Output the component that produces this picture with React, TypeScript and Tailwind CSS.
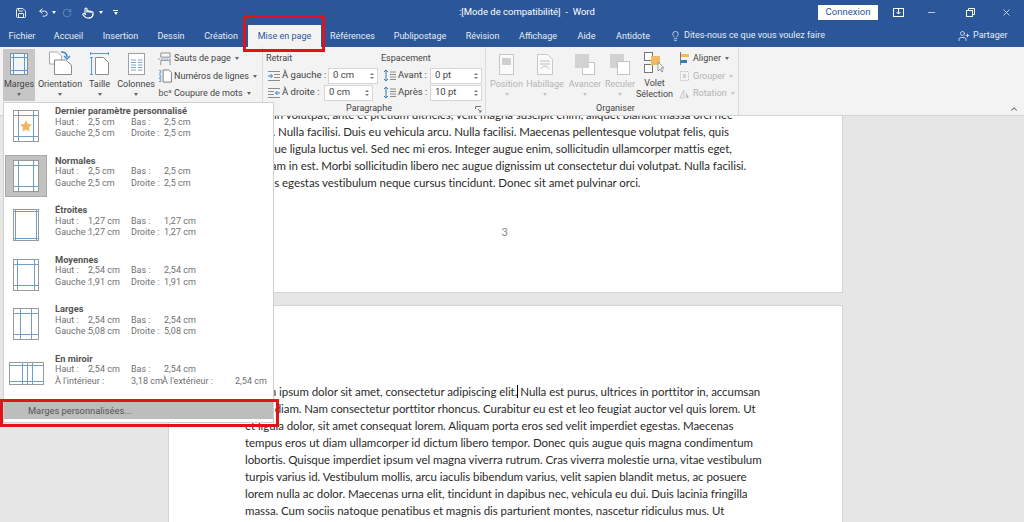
import { Save, Undo2, RotateCw, Pointer, Lightbulb, UserPlus, Minus, X, ChevronUp } from "lucide-react";

const TABS: { label: string; w: number }[] = [
  { label: "Fichier", w: 44 },
  { label: "Accueil", w: 49 },
  { label: "Insertion", w: 55 },
  { label: "Dessin", w: 46 },
  { label: "Création", w: 54 },
  { label: "Mise en page", w: 73 },
  { label: "Références", w: 63 },
  { label: "Publipostage", w: 72 },
  { label: "Révision", w: 53 },
  { label: "Affichage", w: 58 },
  { label: "Aide", w: 39 },
  { label: "Antidote", w: 54 },
];

function Caret({ muted }: { muted?: boolean }) {
  return (
    <span
      className={`mx-auto block h-0 w-0 border-x-[2px] border-t-[3px] border-x-transparent ${
        muted ? "border-t-[#c4c4c4]" : "border-t-[#666666]"
      }`}
    />
  );
}

function LargeButton({
  label,
  icon,
  w,
  muted,
  active,
}: {
  label: string;
  icon: React.ReactNode;
  w: number;
  muted?: boolean;
  active?: boolean;
}) {
  return (
    <div
      className={`flex h-[52px] shrink-0 flex-col items-center ${active ? "bg-[#c6c6c6]" : ""} ${
        muted ? "text-[#b4b4b4]" : "text-[#444444]"
      }`}
      style={{ width: w }}
    >
      <div className="flex h-[26px] items-end justify-center">{icon}</div>
      <div className="mt-[3px] h-[12px] whitespace-nowrap leading-[12px]">{label}</div>
      <div className="mt-[3px]">
        <Caret muted={muted} />
      </div>
    </div>
  );
}

function MarginsLarge() {
  return (
    <svg width="18" height="22" viewBox="0 0 18 22" fill="none">
      <rect x=".5" y=".5" width="17" height="21" fill="#f4f4f4" stroke="#8c8c8c" />
      <path d="M3.500 0v22M14.500 0v22M0 4.500h18M0 17.500h18" stroke="#5c9bd1" />
    </svg>
  );
}

function OrientationIcon() {
  return (
    <svg width="23" height="24" viewBox="0 0 23 24" fill="none">
      <path d="M.5 1h8l4 4v8H.5z" fill="#fff" stroke="#a8a8a8" />
      <path d="M5.500 9h11l6 5v9.500h-17z" fill="#fff" stroke="#8c8c8c" />
      <path d="M12 1c4 0 6 2 6 5" stroke="#3f86c6" strokeWidth="1.6" />
      <path d="M15 5l3 3 3-3" stroke="#3f86c6" strokeWidth="1.4" />
    </svg>
  );
}

function SizeIcon() {
  return (
    <svg width="19" height="23" viewBox="0 0 19 23" fill="none">
      <path d="M0 1.500h19M.5 0v3M18.500 0v3" stroke="#5c9bd1" />
      <path d="M5.500 5.500h8l5 5v12h-13z" fill="#fff" stroke="#8c8c8c" />
      <path d="M1.500 5v18M0 5.500h3M0 22.500h3" stroke="#5c9bd1" />
    </svg>
  );
}

function ColumnsIcon() {
  return (
    <svg width="17" height="22" viewBox="0 0 17 22" fill="none">
      <rect x=".5" y=".5" width="16" height="21" fill="#fff" stroke="#a0a0a0" />
      <path d="M3 7h5M3 9.500h5M3 12h5M3 14.500h5M3 17h5M10 7h4.500M10 9.500h4.500M10 12h4.500M10 14.500h4.500M10 17h4.500" stroke="#7da7cc" />
    </svg>
  );
}

function BreaksIcon() {
  return (
    <svg width="15" height="14" viewBox="0 0 15 14" fill="none">
      <path d="M3 .5h10v4.500H3zM3 13.500V8.500h10v5" stroke="#8c8c8c" />
      <path d="M0 7h15" stroke="#5c9bd1" strokeDasharray="2 1" />
    </svg>
  );
}

function LineNumbersIcon() {
  return (
    <svg width="15" height="14" viewBox="0 0 15 14" fill="none">
      <path d="M1 1h2v3H1M1 6h2v3H1M1 10h2v3H1" stroke="#5c9bd1" />
      <path d="M5.500.5h6l3 3v10h-9z" fill="#fff" stroke="#777777" />
    </svg>
  );
}

function IndentIcon({ right }: { right?: boolean }) {
  return (
    <svg width="12" height="10" viewBox="0 0 12 10" fill="none">
      {right ? (
        <>
          <path d="M0 .5h12M0 3.500h6M0 6.500h6M0 9.500h12" stroke="#8c8c8c" />
          <path d="M12 5H7.500M9.500 3l-2 2 2 2" stroke="#2f7fc1" />
        </>
      ) : (
        <>
          <path d="M0 .5h12M6 3.500h6M6 6.500h6M0 9.500h12" stroke="#8c8c8c" />
          <path d="M0 5h4.500M2.500 3l2 2-2 2" stroke="#2f7fc1" />
        </>
      )}
    </svg>
  );
}

function SpacingIcon() {
  return (
    <svg width="13" height="13" viewBox="0 0 13 13" fill="none">
      <path d="M3 1v11M1 3l2-2 2 2M1 10l2 2 2-2" stroke="#2f7fc1" />
      <path d="M7 3h6M7 5.500h6M7 8h6M7 10.500h6" stroke="#8c8c8c" />
    </svg>
  );
}

function Spin({ value, w }: { value: string; w: number }) {
  return (
    <div
      className="flex h-[16px] shrink-0 items-center justify-between border border-[#d6d6d6] bg-white pl-[4px] pr-[3px] text-[#444444]"
      style={{ width: w }}
    >
      <span>{value}</span>
      <span className="flex flex-col gap-[2px]">
        <span className="block h-0 w-0 border-x-[2px] border-b-[2px] border-x-transparent border-b-[#777777]" />
        <span className="block h-0 w-0 border-x-[2px] border-t-[2px] border-x-transparent border-t-[#777777]" />
      </span>
    </div>
  );
}

function SmallRow({ icon, label, muted }: { icon: React.ReactNode; label: string; muted?: boolean }) {
  return (
    <div className={`flex h-[17.500px] items-center gap-[2px] whitespace-nowrap ${muted ? "text-[#b4b4b4]" : "text-[#444444]"}`}>
      <span className="flex w-[14px] justify-center">{icon}</span>
      <span>{label}</span>
      <span className="ml-[2px]">
        <Caret muted={muted} />
      </span>
    </div>
  );
}

function Ribbon() {
  return (
    <div className="flex h-[69px] shrink-0 border-b border-[#d4d4d4] bg-[#f3f3f3] text-[9px]">
      <div className="flex w-[263px] shrink-0 border-r border-[#dcdcdc] pl-[3px] pt-[2px]">
        <LargeButton label="Marges" w={32} active icon={<MarginsLarge />} />
        <div className="ml-[2px]">
          <LargeButton label="Orientation" w={46} icon={<OrientationIcon />} />
        </div>
        <div className="ml-[2px]">
          <LargeButton label="Taille" w={29} icon={<SizeIcon />} />
        </div>
        <div className="ml-[3px]">
          <LargeButton label="Colonnes" w={38} icon={<ColumnsIcon />} />
        </div>
        <div className="ml-[3px] mt-[1px] flex flex-col text-[9px]">
          <SmallRow label="Sauts de page" icon={<BreaksIcon />} />
          <SmallRow label="Numéros de lignes" icon={<LineNumbersIcon />} />
          <SmallRow
            label="Coupure de mots"
            icon={
              <span className="whitespace-nowrap text-[9px] leading-none text-[#555555]">
                bc<sup className="text-[6px]">a</sup>
              </span>
            }
          />
        </div>
      </div>

      <div className="relative flex w-[223px] shrink-0 border-r border-[#dcdcdc] pl-[3px] pt-[4px] text-[9.500px] text-[#444444]">
        <div className="w-[115px]">
          <div className="h-[16px] text-[9px] leading-[14px]">Retrait</div>
          <div className="flex h-[17px] items-center">
            <span className="ml-[2px] mr-[2px] flex"><IndentIcon /></span>
            <span className="w-[46px] whitespace-nowrap">À gauche :</span>
            <Spin value="0 cm" w={50} />
          </div>
          <div className="flex h-[17px] items-center">
            <span className="ml-[2px] mr-[2px] flex"><IndentIcon right /></span>
            <span className="w-[42px] whitespace-nowrap">À droite :</span>
            <Spin value="0 cm" w={49} />
          </div>
        </div>
        <div className="w-[102px]">
          <div className="h-[16px] text-[9px] leading-[14px]">Espacement</div>
          <div className="flex h-[17px] items-center">
            <span className="ml-[2px] mr-[2px] flex"><SpacingIcon /></span>
            <span className="w-[32px] whitespace-nowrap">Avant :</span>
            <Spin value="0 pt" w={52} />
          </div>
          <div className="flex h-[17px] items-center">
            <span className="ml-[2px] mr-[2px] flex"><SpacingIcon /></span>
            <span className="w-[32px] whitespace-nowrap">Après :</span>
            <Spin value="10 pt" w={52} />
          </div>
        </div>
        <div className="absolute bottom-0 left-[83px] text-[9px] leading-[13px]">Paragraphe</div>
        <svg className="absolute bottom-[2px] right-[3px]" width="7" height="7" viewBox="0 0 7 7" fill="none">
          <path d="M.5 3V.5H6M3 3l3 3M6 4v2H4" stroke="#777777" />
        </svg>
      </div>

      <div className="relative flex w-[253px] shrink-0 border-r border-[#dcdcdc] pl-[3px] pt-[2px]">
        <LargeButton
          label="Position"
          w={35}
          muted
          icon={
            <svg width="15" height="21" viewBox="0 0 15 21" fill="none">
              <rect x=".5" y=".5" width="14" height="20" fill="#fafafa" stroke="#c8c8c8" />
              <rect x="3" y="4" width="9" height="7" fill="#cfcfcf" />
            </svg>
          }
        />
        <div className="ml-[2px]">
          <LargeButton
            label="Habillage"
            w={38}
            muted
            icon={
              <svg width="16" height="21" viewBox="0 0 16 21" fill="none">
                <path d="M.5.500h10l5 5v15H.500z" fill="#fafafa" stroke="#c8c8c8" />
                <path d="M3 7h10M3 10h10M4 15c2-4 6-4 8 0" stroke="#bdbdbd" />
              </svg>
            }
          />
        </div>
        <div className="ml-[3px]">
          <LargeButton
            label="Avancer"
            w={36}
            muted
            icon={
              <svg width="20" height="21" viewBox="0 0 20 21" fill="none">
                <rect x="7.500" y="8.500" width="12" height="12" fill="#fff" stroke="#c4c4c4" />
                <rect width="14" height="14" fill="#d2d2d2" />
              </svg>
            }
          />
        </div>
        <div className="ml-[1px]">
          <LargeButton
            label="Reculer"
            w={32}
            muted
            icon={
              <svg width="20" height="21" viewBox="0 0 20 21" fill="none">
                <rect width="14" height="14" fill="#d2d2d2" />
                <rect x="7.500" y="7.500" width="12" height="13" fill="#fff" stroke="#c4c4c4" />
              </svg>
            }
          />
        </div>
        <div className="flex h-[52px] w-[37px] shrink-0 flex-col items-center text-[#444444]">
          <svg className="mt-[3px]" width="21" height="21" viewBox="0 0 21 21" fill="none">
            <rect x=".5" y=".5" width="8" height="8" fill="#fff" stroke="#777777" />
            <rect x=".5" y="12.500" width="8" height="8" fill="#fff" stroke="#777777" />
            <rect x="7" y="4" width="9" height="9" fill="#f0b962" />
            <path d="M14 10v9l2-2 2 3 1-1-2-3h3z" fill="#fff" stroke="#777777" strokeWidth=".7" />
          </svg>
          <div className="mt-[4px] whitespace-nowrap leading-[12px]">Volet</div>
          <div className="whitespace-nowrap leading-[11px]">Sélection</div>
        </div>
        <div className="ml-[4px] mt-[1px] flex flex-col text-[9px]">
          <SmallRow
            label="Aligner"
            icon={
              <svg width="11" height="13" viewBox="0 0 11 13" fill="none">
                <path d="M1.500 0v13" stroke="#777777" />
                <rect x="2" y="2" width="8" height="3" fill="#f0b962" />
                <rect x="2" y="8" width="6" height="3" fill="#2f7fc1" />
              </svg>
            }
          />
          <SmallRow
            muted
            label="Grouper"
            icon={
              <svg width="11" height="12" viewBox="0 0 11 12" fill="none">
                <rect x="1.500" y="1.500" width="8" height="9" stroke="#c8c8c8" strokeDasharray="2 1" />
                <rect x="4" y="4" width="3" height="4" fill="#d2d2d2" />
              </svg>
            }
          />
          <SmallRow
            muted
            label="Rotation"
            icon={
              <svg width="11" height="10" viewBox="0 0 11 10" fill="none">
                <path d="M1 9l4-8v8z" stroke="#c8c8c8" />
                <path d="M7 9V3l3 6z" fill="#bdbdbd" />
              </svg>
            }
          />
        </div>
        <div className="absolute bottom-0 left-[110px] text-[9px] leading-[13px] text-[#444444]">Organiser</div>
      </div>

      <div className="relative flex-1">
        <ChevronUp className="absolute bottom-[1px] right-[5px] h-[10px] w-[10px] text-[#666666]" strokeWidth={2.5} />
      </div>
    </div>
  );
}

const MARGINS: {
  title: string;
  rows: string[][];
  icon: { t: number; b: number; l: number; r: number };
  star?: boolean;
  selected?: boolean;
}[] = [
  {
    title: "Dernier paramètre personnalisé",
    rows: [["Haut :", "2,5 cm", "Bas :", "2,5 cm"], ["Gauche :", "2,5 cm", "Droite :", "2,5 cm"]],
    icon: { t: 5, b: 5, l: 5, r: 5 },
    star: true,
  },
  {
    title: "Normales",
    rows: [["Haut :", "2,5 cm", "Bas :", "2,5 cm"], ["Gauche :", "2,5 cm", "Droite :", "2,5 cm"]],
    icon: { t: 5, b: 5, l: 5, r: 5 },
    selected: true,
  },
  {
    title: "Étroites",
    rows: [["Haut :", "1,27 cm", "Bas :", "1,27 cm"], ["Gauche :", "1,27 cm", "Droite :", "1,27 cm"]],
    icon: { t: 2, b: 2, l: 2, r: 2 },
  },
  {
    title: "Moyennes",
    rows: [["Haut :", "2,54 cm", "Bas :", "2,54 cm"], ["Gauche :", "1,91 cm", "Droite :", "1,91 cm"]],
    icon: { t: 5, b: 5, l: 4, r: 4 },
  },
  {
    title: "Larges",
    rows: [["Haut :", "2,54 cm", "Bas :", "2,54 cm"], ["Gauche :", "5,08 cm", "Droite :", "5,08 cm"]],
    icon: { t: 5, b: 5, l: 7, r: 7 },
  },
];

function MarginIcon({ t, b, l, r, star }: { t: number; b: number; l: number; r: number; star?: boolean }) {
  return (
    <svg width="26" height="32" viewBox="0 0 26 32" fill="none">
      <rect x=".5" y=".5" width="25" height="31" fill="#ffffff" stroke="#9a9a9a" />
      <path
        d={`M${l + 0.5} 1v30M${25.5 - r} 1v30M1 ${t + 0.5}h24M1 ${31.5 - b}h24`}
        stroke="#6f9fc8"
      />
      {star && <path d="M13 10l1.800 3.900 4.200.500-3.100 2.900.800 4.200-3.700-2.100-3.700 2.100.800-4.200-3.100-2.900 4.200-.500z" fill="#eeb664" />}
    </svg>
  );
}

function MarginsMenu() {
  return (
    <div className="absolute left-[3px] top-[102px] w-[271px] border border-[#d0d0d0] bg-white text-[9px] leading-[11.500px] text-[#707070]">
      {MARGINS.map((m) => (
        <div key={m.title} className="flex h-[49.500px]">
          <div
            className={`ml-[1px] mt-[2px] flex h-[42px] w-[42px] shrink-0 items-center justify-center ${
              m.selected ? "border border-[#a8a8a8] bg-[#c2c2c2]" : ""
            }`}
          >
            <MarginIcon {...m.icon} star={m.star} />
          </div>
          <div className="ml-[8px] mt-[2px]">
            <div className="text-[9.300px] font-bold text-[#555555]">{m.title}</div>
            {m.rows.map((r) => (
              <div key={r[0]} className="grid grid-cols-[33px_43px_33px_50px] whitespace-nowrap">
                {r.map((c, i) => (
                  <span key={i}>{c}</span>
                ))}
              </div>
            ))}
          </div>
        </div>
      ))}
      <div className="flex h-[49.500px]">
        <div className="ml-[1px] mt-[2px] flex h-[42px] w-[42px] shrink-0 items-center justify-center">
          <svg width="35" height="23" viewBox="0 0 35 23" fill="none">
            <rect x=".5" y=".5" width="34" height="22" fill="#fff" stroke="#9a9a9a" />
            <path d="M13.500 1v21M18.500 1v21M23.500 1v21M1 3.500h33M1 19.500h33" stroke="#6f9fc8" />
          </svg>
        </div>
        <div className="ml-[8px] mt-[2px]">
          <div className="text-[9.300px] font-bold text-[#555555]">En miroir</div>
          <div className="grid grid-cols-[33px_43px_33px_50px] whitespace-nowrap">
            <span>Haut :</span>
            <span>2,54 cm</span>
            <span>Bas :</span>
            <span>2,54 cm</span>
          </div>
          <div className="flex whitespace-nowrap">
            <span className="w-[76px]">À l'intérieur :</span>
            <span className="w-[31px]">3,18 cm</span>
            <span className="w-[73px]">À l'extérieur :</span>
            <span>2,54 cm</span>
          </div>
        </div>
      </div>
      <div className="mt-[2px] h-[17px] bg-[#bdbdbd] pl-[24px] text-[9.300px] leading-[17px] text-[#555555]">Marges personnalisées...</div>
      <div className="h-[3px]" />
    </div>
  );
}

function TextLine({ children }: { children: React.ReactNode }) {
  return <div className="h-[17px] whitespace-nowrap leading-[17px]">{children}</div>;
}

function Document() {
  return (
    <div className="min-h-0 flex-1 overflow-hidden bg-[#e6e6e6] pl-[168px] font-['Lato',sans-serif] text-[11.500px] tracking-[-0.06px] text-[#2b2b2b]">
      <div className="relative h-[177px] w-[675px] overflow-hidden border-x border-b border-[#d4d4d4] bg-white pl-[76px]">
        <div className="-mt-[10px]">
          <TextLine>Proin in volutpat, ante et pretium ultricies, velit magna suscipit enim, aliquet blandit massa orci nec</TextLine>
          <TextLine>Ut eu. Nulla facilisi. Duis eu vehicula arcu. Nulla facilisi. Maecenas pellentesque volutpat felis, quis</TextLine>
          <TextLine>Quisque ligula luctus vel. Sed nec mi eros. Integer augue enim, sollicitudin ullamcorper mattis eget,</TextLine>
          <TextLine>Aliquam in est. Morbi sollicitudin libero nec augue dignissim ut consectetur dui volutpat. Nulla facilisi.</TextLine>
          <TextLine>Mauris egestas vestibulum neque cursus tincidunt. Donec sit amet pulvinar orci.</TextLine>
        </div>
        <div className="-ml-[1px] mt-[32px] pr-[77px] text-center text-[#8a8a8a]">3</div>
      </div>
      <div className="mt-[12px] h-[220px] w-[675px] border-x border-t border-[#d4d4d4] bg-white pl-[76px] pt-[77px]">
        <TextLine>
          Lorem ipsum dolor sit amet, consectetur adipiscing elit.
          <span className="mr-[2px] inline-block h-[13px] w-px bg-black align-[-2px]" />
          Nulla est purus, ultrices in porttitor in, accumsan
        </TextLine>
        <TextLine>Nunc diam. Nam consectetur porttitor rhoncus. Curabitur eu est et leo feugiat auctor vel quis lorem. Ut</TextLine>
        <TextLine>et ligula dolor, sit amet consequat lorem. Aliquam porta eros sed velit imperdiet egestas. Maecenas</TextLine>
        <TextLine>tempus eros ut diam ullamcorper id dictum libero tempor. Donec quis augue quis magna condimentum</TextLine>
        <TextLine>lobortis. Quisque imperdiet ipsum vel magna viverra rutrum. Cras viverra molestie urna, vitae vestibulum</TextLine>
        <TextLine>turpis varius id. Vestibulum mollis, arcu iaculis bibendum varius, velit sapien blandit metus, ac posuere</TextLine>
        <TextLine>lorem nulla ac dolor. Maecenas urna elit, tincidunt in dapibus nec, vehicula eu dui. Duis lacinia fringilla</TextLine>
        <TextLine>massa. Cum sociis natoque penatibus et magnis dis parturient montes, nascetur ridiculus mus. Ut</TextLine>
      </div>
    </div>
  );
}

export default function App() {
  return (
    <div className="relative flex h-[522px] w-[1024px] flex-col overflow-hidden bg-[#e6e6e6] font-['Roboto',sans-serif]">
      <div className="flex h-[25px] shrink-0 items-center bg-[#2b579a] text-white">
        <div className="flex w-[459px] shrink-0 items-center pl-[15px]">
          <Save className="h-[12px] w-[12px]" strokeWidth={1.8} />
          <Undo2 className="ml-[11px] h-[11px] w-[11px]" strokeWidth={2} />
          <span className="ml-[3px] h-0 w-0 border-x-[2px] border-t-[3px] border-x-transparent border-t-white" />
          <RotateCw className="ml-[6px] h-[10px] w-[10px] text-[#6f8fbf]" strokeWidth={2} />
          <Pointer className="ml-[10px] h-[12px] w-[12px]" strokeWidth={2.2} />
          <span className="ml-[5px] h-0 w-0 border-x-[2px] border-t-[3px] border-x-transparent border-t-white" />
          <span className="ml-[10px] flex flex-col items-center gap-[1px]">
            <span className="h-px w-[5px] bg-white" />
            <span className="h-0 w-0 border-x-[2.500px] border-t-[3px] border-x-transparent border-t-white" />
          </span>
        </div>
        <div className="w-[359px] shrink-0 whitespace-nowrap text-[9.500px]">:[Mode de compatibilité]&nbsp; - &nbsp;Word</div>
        <div className="flex h-[15px] w-[60px] shrink-0 items-center justify-center bg-white text-[9.500px] text-[#2b579a]">
          Connexion
        </div>
        <svg className="ml-[15px]" width="11" height="9" viewBox="0 0 11 9" fill="none">
          <rect x=".5" y=".5" width="10" height="8" stroke="white" />
          <path d="M5.500 1v5M3.500 4l2 2 2-2" stroke="white" />
        </svg>
        <Minus className="ml-[22px] h-[11px] w-[11px]" strokeWidth={1.5} />
        <svg className="ml-[29px]" width="9" height="9" viewBox="0 0 9 9" fill="none">
          <path d="M2.500 2V.5h6v6H7" stroke="white" />
          <rect x=".5" y="2.500" width="6" height="6" stroke="white" />
        </svg>
        <X className="ml-[26px] h-[11px] w-[11px]" strokeWidth={1.5} />
      </div>

      <div className="flex h-[22px] shrink-0 items-center bg-[#2b579a] text-[9px] text-[#e6ecf5]">
        {TABS.map((t) => (
          <div
            key={t.label}
            className={`flex h-full shrink-0 items-center justify-center pt-[1px] ${
              t.label === "Mise en page" ? "bg-[#f3f3f3] text-[#2b579a]" : ""
            }`}
            style={{ width: t.w }}
          >
            {t.label}
          </div>
        ))}
        <Lightbulb className="ml-[10px] h-[12px] w-[11px] shrink-0" strokeWidth={1.6} />
        <span className="ml-[3px] w-[140px] shrink-0 whitespace-nowrap">Dites-nous ce que vous voulez faire</span>
        <UserPlus className="ml-[134px] h-[12px] w-[12px] shrink-0" strokeWidth={1.6} />
        <span className="ml-[3px] whitespace-nowrap">Partager</span>
      </div>

      <Ribbon />
      <Document />
      <MarginsMenu />

      <div className="absolute left-[243px] top-[15px] h-[37px] w-[82px] border-[3px] border-[#e0131c]" />
      <div className="absolute left-0 top-[399px] h-[28px] w-[279px] border-[3px] border-[#e0131c]" />
    </div>
  );
}
